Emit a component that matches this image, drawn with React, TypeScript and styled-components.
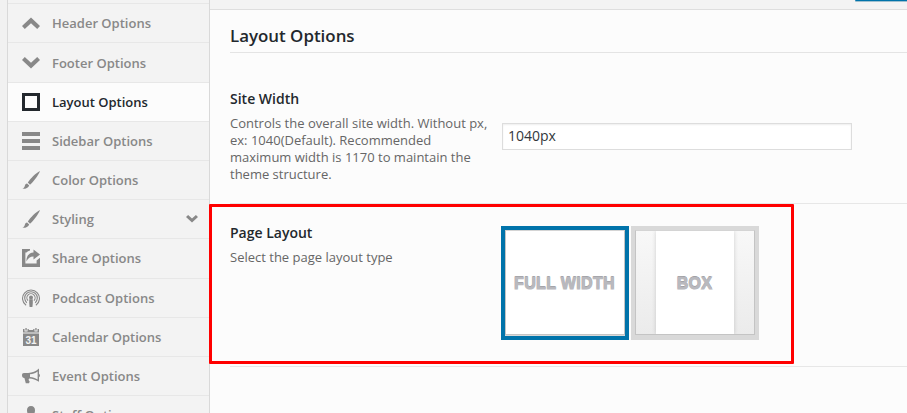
import React from "react";
import styled, { createGlobalStyle } from "styled-components";

const GlobalStyle = createGlobalStyle`
  * { box-sizing: border-box; }
  body { margin: 0; overflow: hidden; background: #f1f1f1; }
`;

const Page = styled.div`
  position: relative;
  display: flex;
  width: 907px;
  height: 413px;
  overflow: hidden;
  background: #f1f1f1;
  font-family: "Open Sans", "Noto Sans", sans-serif;
  font-size: 13px;
`;

const Sidebar = styled.ul`
  width: 203px;
  flex: none;
  margin: 0 0 0 7px;
  padding: 3.28px 0 0;
  list-style: none;
  border: solid #d9d9d9;
  border-width: 0 1px;
  background: #f3f3f3;
`;

const MenuItem = styled.li<{ $active?: boolean }>`
  display: flex;
  align-items: center;
  height: 39.2px;
  padding: 0 10px 0 14px;
  border-bottom: 1px solid #e7e7e7;
  background: ${(p) => (p.$active ? "#fcfcfc" : "#f3f3f3")};
  color: ${(p) => (p.$active ? "#23282d" : "#888")};
  font-weight: 600;
  line-height: 18px;
  white-space: nowrap;
`;

const MenuStart = styled.li`
  height: 1px;
  background: #e7e7e7;
`;

const MenuLabel = styled.span`
  flex: 1;
  margin-left: 12px;
`;

const Icon = styled.svg`
  display: block;
  flex: none;
  width: 18px;
  height: 18px;
  fill: currentColor;
`;

const Chevron = styled(Icon)`
  width: 14px;
  height: 10px;
`;

const Content = styled.main`
  flex: 1;
  display: flex;
  flex-direction: column;
  min-width: 0;
`;

const ActionBar = styled.header`
  display: flex;
  justify-content: flex-end;
  height: 10px;
  border-bottom: 1px solid #dedede;
  background: #f3f3f3;
`;

const SaveButton = styled.div`
  width: 52px;
  height: 1px;
  border-bottom-left-radius: 2px;
  background: #0073aa;
  box-shadow: 0 1px 0 #9fc0cf;
`;

const Panel = styled.section`
  flex: 1;
  padding: 0 0 0 20px;
  background: #fcfcfc;
`;

const Heading = styled.h2`
  height: 43px;
  margin: 0;
  padding-top: 14px;
  border-bottom: 1px solid #e4e4e4;
  color: #23282d;
  font-size: 16.9px;
  font-weight: 600;
  line-height: 24px;
`;

const Field = styled.div<{ $height: number; $top: number }>`
  display: flex;
  align-items: flex-start;
  height: ${(p) => p.$height}px;
  padding-top: ${(p) => p.$top}px;
  border-bottom: 1px solid #e7e7e7;
`;

const FieldText = styled.div`
  width: 272px;
  flex: none;
`;

const FieldTitle = styled.h3`
  margin: 0 0 7px;
  color: #23282d;
  font-size: 14px;
  font-weight: 600;
  line-height: 18px;
`;

const Description = styled.p`
  width: 262px;
  margin: 0;
  color: #666;
  line-height: 17px;
`;

const TextInput = styled.input`
  width: 350px;
  height: 27px;
  margin: 33px 0 0;
  padding: 0 5px 3px;
  border: 1px solid #ddd;
  background: #fff;
  box-shadow: inset 0 1px 2px rgba(0, 0, 0, 0.07);
  color: #32373c;
  font: 14px "Open Sans", "Noto Sans", sans-serif;
  outline: none;
`;

const Choices = styled.div`
  display: flex;
  gap: 2px;
  margin: 2px 0 0 -1px;
`;

const Choice = styled.div<{ $selected?: boolean }>`
  width: 128px;
  height: 114px;
  border: 4px solid ${(p) => (p.$selected ? "#0073aa" : "#d9d9d9")};
  background: #d9d9d9;
`;

const Thumb = styled.div`
  display: flex;
  justify-content: center;
  height: 105px;
  border: 1px solid #c4c4c4;
  border-top-color: #d4d4d4;
  background: linear-gradient(#f8f8f8, #ebebeb);
`;

const ThumbPage = styled.div<{ $boxed?: boolean }>`
  display: flex;
  align-items: center;
  justify-content: center;
  width: ${(p) => (p.$boxed ? "78px" : "100%")};
  background: #fff;
  box-shadow: ${(p) => (p.$boxed ? "0 0 4px rgba(0, 0, 0, 0.17)" : "none")};
  clip-path: inset(0 -4px);
`;

const ThumbLabel = styled.span`
  padding-top: 2px;
  margin-right: 1px;
  color: #b9b9be;
  font: bold 16px/19px "Liberation Sans", sans-serif;
  letter-spacing: 0.35px;
  -webkit-text-stroke: 1px #b9b9be;
  text-shadow: 0 -1px 0 #8c8c90;
  white-space: nowrap;
`;

const Highlight = styled.div`
  position: absolute;
  left: 209px;
  top: 204px;
  width: 585px;
  height: 160px;
  border: 3px solid #f00;
  border-radius: 1px;
  pointer-events: none;
`;

const brush = (
  <path d="M18 0C13.5 2.4 8.6 7.2 5.8 11.6L8 13.7C11.6 10.4 16 5.2 18 0ZM5.1 12.4C3.7 12.7 3.1 13.5 2.8 14.9C2.4 16.4 1.5 17.3.2 17.7C2.6 18.2 6.2 17.3 7.2 14.5Z" />
);
const iconUp = <path d="M9 3.6L18 12.1L15.2 15L9 9.2L2.8 15L0 12.1Z" />;
const iconDown = <path d="M9 14.4L0 5.9L2.8 3L9 8.8L15.2 3L18 5.9Z" />;
const iconSquare = <path fillRule="evenodd" d="M0 0H18V18H0ZM3 3V15H15V3Z" />;
const iconLines = <path d="M0 0H18V4H0ZM0 7H18V11H0ZM0 14H18V18H0Z" />;
const iconShare = (
  <path d="M0 0H8V1.5C6.5 2 5.4 2.6 4.4 3.4H3.4V14.6H14.6V11.5L18 8.8V18H0ZM11.5.6L18 5.4L11.5 10.6V7.6C8 7.6 6.2 9.2 4.4 12.4C4.4 7.2 6.8 3.6 11.5 3.4Z" />
);
const iconPodcast = (
  <>
    <g fill="none" stroke="currentColor" strokeWidth="1.1">
      <path d="M4.1 16.3A8.45 8.45 0 1 1 13.9 16.3" />
      <path d="M4.8 13.8A6.3 6.3 0 1 1 13.2 13.8" />
      <path d="M6 11.6A4.1 4.1 0 1 1 12 11.6" />
    </g>
    <circle cx="9" cy="8.4" r="2" />
    <path d="M7.2 10.2H10.8V14L10.4 18H7.6L7.2 14Z" />
  </>
);
const iconEvent = (
  <path
    fillRule="evenodd"
    d="M17 1.5V6.8C18.3 7.4 18.3 9.6 17 10.2V14.8C13.8 12.8 10.8 11.8 7.2 11.5C6.3 12.6 6.4 13.6 7.7 14.5L7 16.2H3.8L2.4 11.1C.7 10.9 0 9.8 0 8.3C0 6.7.6 6 2 6H6.2C10.5 5.8 13.6 4.4 17 1.5ZM15.6 4.4C13 6.2 10.9 6.9 8 7.2V10.1C10.9 10.4 13 11 15.6 12.6Z"
  />
);
const iconStaff = (
  <path d="M9 0C11.6 0 13 1.8 13 4.2C13 6.6 12 9 10.7 9.4V11L16 13V18H2V13L7.3 11V9.4C6 9 5 6.6 5 4.2C5 1.8 6.4 0 9 0Z" />
);
const CalendarText = styled.text`
  fill: #f3f3f3;
  font: bold 10px "Liberation Sans", sans-serif;
  text-anchor: middle;
`;
const iconCalendar = (
  <>
    <path d="M1 1H2.5V3.5H5.5V1H6.8V2H11.2V1H12.5V3.5H15.5V1H17V4.6H1ZM3.4 0H4.7V2.6H3.4ZM13.3 0H14.6V2.6H13.3ZM1 5.6H17V18H1Z" />
    <CalendarText x="9" y="16">31</CalendarText>
  </>
);

type Item = { label: string; icon: React.ReactNode; active?: boolean; expandable?: boolean };

const items: Item[] = [
  { label: "Header Options", icon: iconUp },
  { label: "Footer Options", icon: iconDown },
  { label: "Layout Options", icon: iconSquare, active: true },
  { label: "Sidebar Options", icon: iconLines },
  { label: "Color Options", icon: brush },
  { label: "Styling", icon: brush, expandable: true },
  { label: "Share Options", icon: iconShare },
  { label: "Podcast Options", icon: iconPodcast },
  { label: "Calendar Options", icon: iconCalendar },
  { label: "Event Options", icon: iconEvent },
  { label: "Staff Options", icon: iconStaff },
];

export default function App() {
  return (
    <Page>
      <GlobalStyle />
      <Sidebar>
        <MenuStart />
        {items.map((item) => (
          <MenuItem key={item.label} $active={item.active}>
            <Icon viewBox="0 0 18 18">{item.icon}</Icon>
            <MenuLabel>{item.label}</MenuLabel>
            {item.expandable && (
              <Chevron viewBox="0 0 14 10">
                <path d="M7 8.6L1 3.1L3.1 1L7 4.6L10.9 1L13 3.1Z" />
              </Chevron>
            )}
          </MenuItem>
        ))}
      </Sidebar>
      <Content>
        <ActionBar>
          <SaveButton />
        </ActionBar>
        <Panel>
          <Heading>Layout Options</Heading>
          <Field $height={151} $top={37}>
            <FieldText>
              <FieldTitle>Site Width</FieldTitle>
              <Description>
                Controls the overall site width. Without px, ex: 1040(Default). Recommended maximum width is 1170 to
                maintain the theme structure.
              </Description>
            </FieldText>
            <TextInput defaultValue="1040px" />
          </Field>
          <Field $height={163} $top={20}>
            <FieldText>
              <FieldTitle>Page Layout</FieldTitle>
              <Description>Select the page layout type</Description>
            </FieldText>
            <Choices>
              <Choice $selected>
                <Thumb>
                  <ThumbPage>
                    <ThumbLabel>FULL WIDTH</ThumbLabel>
                  </ThumbPage>
                </Thumb>
              </Choice>
              <Choice>
                <Thumb>
                  <ThumbPage $boxed>
                    <ThumbLabel>BOX</ThumbLabel>
                  </ThumbPage>
                </Thumb>
              </Choice>
            </Choices>
          </Field>
        </Panel>
      </Content>
      <Highlight />
    </Page>
  );
}
